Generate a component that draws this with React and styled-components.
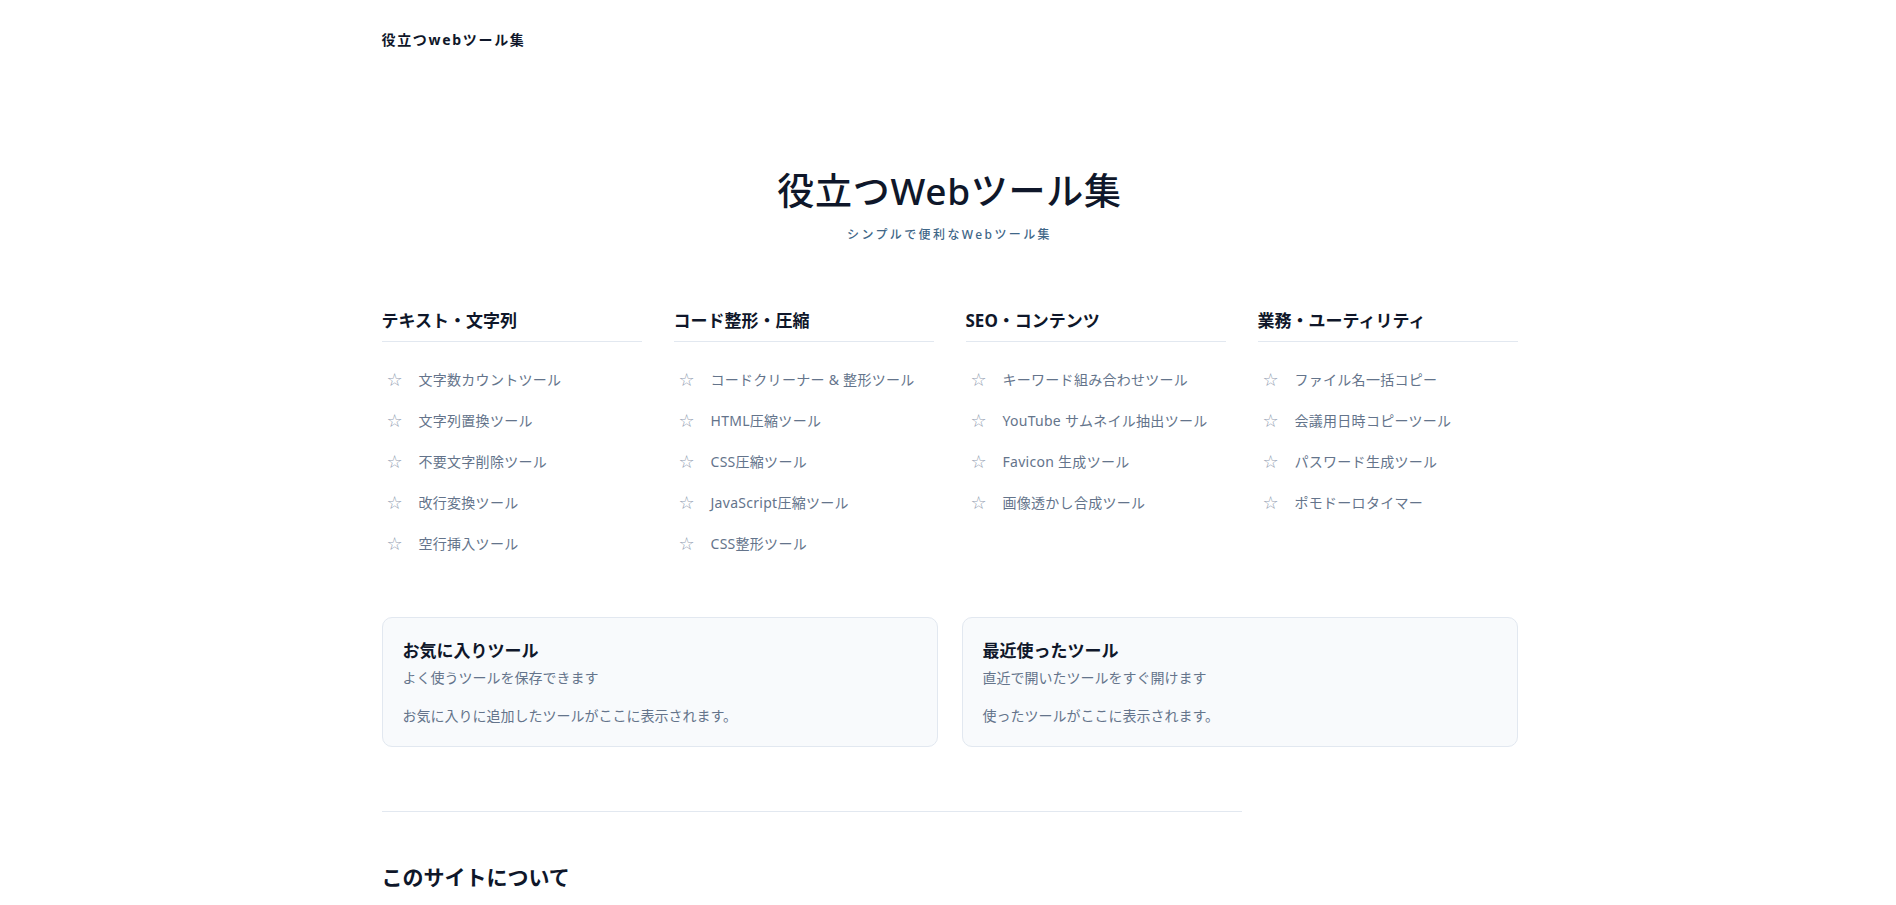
import React from 'react'
import styled, { createGlobalStyle } from 'styled-components'

const GlobalStyle = createGlobalStyle`
  * { box-sizing: border-box; }
  body {
    margin: 0;
    background: #ffffff;
    font-family: "Noto Sans", "Noto Sans CJK JP", sans-serif;
    color: #0f172a;
  }
`

const categories = [
  {
    title: 'テキスト・文字列',
    tools: ['文字数カウントツール', '文字列置換ツール', '不要文字削除ツール', '改行変換ツール', '空行挿入ツール'],
  },
  {
    title: 'コード整形・圧縮',
    tools: ['コードクリーナー & 整形ツール', 'HTML圧縮ツール', 'CSS圧縮ツール', 'JavaScript圧縮ツール', 'CSS整形ツール'],
  },
  {
    title: 'SEO・コンテンツ',
    tools: ['キーワード組み合わせツール', 'YouTube サムネイル抽出ツール', 'Favicon 生成ツール', '画像透かし合成ツール'],
  },
  {
    title: '業務・ユーティリティ',
    tools: ['ファイル名一括コピー', '会議用日時コピーツール', 'パスワード生成ツール', 'ポモドーロタイマー'],
  },
]

const panels = [
  { title: 'お気に入りツール', sub: 'よく使うツールを保存できます', empty: 'お気に入りに追加したツールがここに表示されます。' },
  { title: '最近使ったツール', sub: '直近で開いたツールをすぐ開けます', empty: '使ったツールがここに表示されます。' },
]

const Page = styled.div`
  max-width: 1139px;
  margin: 0 auto;
  padding-left: 3px;
`

const TopBar = styled.header`
  padding: 28px 0 0;
  height: 100px;
`

const SiteName = styled.a`
  font-size: 14px;
  font-weight: 700;
  letter-spacing: 0.12em;
  line-height: 20px;
  color: #0f172a;
  text-decoration: none;
`

const Hero = styled.section`
  text-align: center;
  padding: 67px 0 0;
`

const HeroTitle = styled.h1`
  margin: 0;
  font-size: 37px;
  font-weight: 500;
  line-height: 48px;
  letter-spacing: 0.02em;
  color: #0f172a;
`

const HeroSub = styled.p`
  margin: 11px 0 0;
  font-size: 12px;
  font-weight: 500;
  line-height: 18px;
  letter-spacing: 0.2em;
  color: #3f6788;
`

const CategoryGrid = styled.div`
  display: grid;
  grid-template-columns: repeat(4, 1fr);
  gap: 32px;
  margin-top: 65px;
`

const CategoryTitle = styled.h2`
  margin: 0;
  padding-bottom: 8px;
  border-bottom: 1px solid #e2e8f0;
  font-size: 17px;
  font-weight: 700;
  line-height: 24px;
  color: #0f172a;
`

const ToolList = styled.ul`
  list-style: none;
  margin: 0;
  padding: 27px 0 0;
  display: flex;
  flex-direction: column;
  gap: 20px;
`

const ToolItem = styled.li`
  display: flex;
  align-items: center;
  padding-left: 5px;
  font-size: 14px;
  line-height: 21px;
  letter-spacing: 0.02em;
  color: #64748b;
`

const Star = styled.span`
  width: 17px;
  margin-right: 15px;
  font-size: 18px;
  line-height: 21px;
  color: #8f9bb0;
  font-family: "DejaVu Sans", sans-serif;
`

const PanelGrid = styled.div`
  display: grid;
  grid-template-columns: 1fr 1fr;
  gap: 24px;
  margin-top: 63px;
`

const Panel = styled.section`
  background: #f8fafc;
  border: 1px solid #e2e8f0;
  border-radius: 10px;
  padding: 21px 20px 20px;
`

const PanelTitle = styled.h3`
  margin: 0;
  font-size: 17px;
  font-weight: 700;
  line-height: 24px;
  color: #0f172a;
`

const PanelSub = styled.p`
  margin: 4px 0 0;
  font-size: 14px;
  line-height: 21px;
  color: #64748b;
`

const PanelEmpty = styled.p`
  margin: 17px 0 0;
  font-size: 14px;
  line-height: 21px;
  color: #64748b;
`

const Divider = styled.hr`
  width: 860px;
  margin: 64px 0 0;
  border: 0;
  border-top: 1px solid #e2e8f0;
`

const AboutTitle = styled.h2`
  margin: 50px 0 0;
  font-size: 21px;
  font-weight: 700;
  line-height: 30px;
  color: #0f172a;
`

const App = () => {
  return <>
    <GlobalStyle/>
    <Page>
      <TopBar>
        <SiteName href="#">役立つwebツール集</SiteName>
      </TopBar>
      <Hero>
        <HeroTitle>役立つWebツール集</HeroTitle>
        <HeroSub>シンプルで便利なWebツール集</HeroSub>
      </Hero>
      <CategoryGrid>
        {categories.map(c =>
          <div key={c.title}>
            <CategoryTitle>{c.title}</CategoryTitle>
            <ToolList>
              {c.tools.map(t =>
                <ToolItem key={t}><Star>☆</Star>{t}</ToolItem>
              )}
            </ToolList>
          </div>
        )}
      </CategoryGrid>
      <PanelGrid>
        {panels.map(p =>
          <Panel key={p.title}>
            <PanelTitle>{p.title}</PanelTitle>
            <PanelSub>{p.sub}</PanelSub>
            <PanelEmpty>{p.empty}</PanelEmpty>
          </Panel>
        )}
      </PanelGrid>
      <Divider/>
      <AboutTitle>このサイトについて</AboutTitle>
    </Page>
  </>
};

export default App;
